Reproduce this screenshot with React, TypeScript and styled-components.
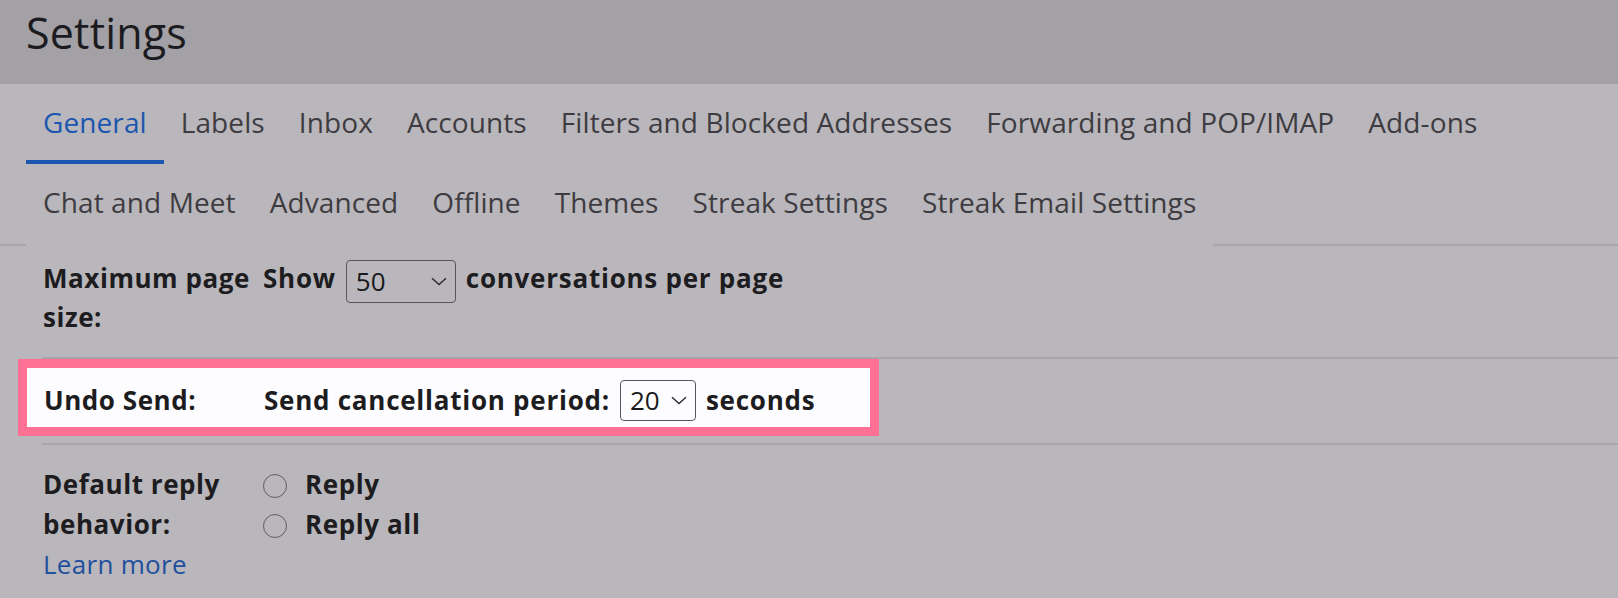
import React from "react";
import styled, { createGlobalStyle } from "styled-components";

const PAGE = "#b9b7bb";
const RULE = "#a8a6aa";
const INK = "#1d1c20";

const Global = createGlobalStyle`
  html, body {
    margin: 0;
    padding: 0;
    background: ${PAGE};
    font-family: "Open Sans", "Noto Sans", sans-serif;
    color: ${INK};
  }
  #root { min-height: 598px; }
`;

const Page = styled.div`
  width: 1618px;
  min-height: 598px;
  background: ${PAGE};
  overflow: hidden;
`;

const Header = styled.header`
  height: 84px;
  box-sizing: border-box;
  padding: 3px 0 0 26px;
  background: #a3a1a6;
  font-size: 43px;
  line-height: 60px;
  color: #1c1b1f;
  letter-spacing: 0.2px;
`;

const TabNav = styled.nav`
  display: flex;
  flex-wrap: wrap;
  padding-left: 26px;
  border-bottom: 2px solid ${RULE};
  box-sizing: border-box;
`;

const Tab = styled.a<{ $active?: boolean }>`
  position: relative;
  display: block;
  height: 82px;
  margin-bottom: -2px;
  padding: 0 17px;
  background: ${PAGE};
  font-size: 28px;
  line-height: 76px;
  letter-spacing: 0.1px;
  color: ${(p) => (p.$active ? "#1b56b0" : "#3e3c41")};
  white-space: nowrap;
  cursor: pointer;
  &::after {
    content: "";
    position: absolute;
    left: 0;
    right: 0;
    bottom: 2px;
    height: 4px;
    background: ${(p) => (p.$active ? "#1b56b0" : "transparent")};
  }
`;

const TabBreak = styled.div`
  flex-basis: 100%;
  height: 0;
`;

const Row = styled.section<{ $pt: number; $pb: number }>`
  margin-left: 42px;
  padding: ${(p) => p.$pt}px 0 ${(p) => p.$pb}px 1px;
  border-bottom: 2px solid ${RULE};
`;

const PlainRow = styled.section<{ $pt: number }>`
  margin-left: 42px;
  padding: ${(p) => p.$pt}px 0 0 1px;
`;

const Grid = styled.div<{ $lh: number }>`
  display: grid;
  grid-template-columns: 220px 1fr;
  font-size: 26px;
  line-height: ${(p) => p.$lh}px;
`;

const Label = styled.div`
  font-weight: 700;
  letter-spacing: 0.55px;
  color: ${INK};
`;

const Controls = styled.div`
  display: flex;
  align-items: flex-start;
  gap: 10px;
  font-weight: 700;
  letter-spacing: 0.75px;
  white-space: nowrap;
`;

const Highlight = styled.div`
  margin-left: -16px;
  width: 843px;
  box-sizing: border-box;
  padding: 13px 0 6px 17px;
  background: #fdfcfe;
  box-shadow: 0 0 0 9px #ff7194;
`;

const SelectBox = styled.div<{ $w: number; $h: number; $mt: number }>`
  box-sizing: border-box;
  width: ${(p) => p.$w}px;
  height: ${(p) => p.$h}px;
  margin-top: ${(p) => p.$mt}px;
  padding: 0 8px 0 9px;
  display: flex;
  align-items: center;
  justify-content: space-between;
  border: 1.5px solid #58565b;
  border-radius: 4px;
  font-weight: 400;
  font-size: 26px;
  letter-spacing: 0;
  color: #1a191c;
`;

const Chevron = () => (
  <svg width="16" height="9" viewBox="0 0 16 9" fill="none">
    <path d="M1 1.2 L8 7.5 L15 1.2" stroke="#2a292d" strokeWidth="1.4" />
  </svg>
);

const Radios = styled.div`
  display: flex;
  flex-direction: column;
`;

const RadioItem = styled.label`
  display: flex;
  align-items: center;
  gap: 18px;
  height: 40px;
  font-weight: 700;
  letter-spacing: 0.6px;
`;

const RadioCircle = styled.span`
  width: 24px;
  height: 24px;
  box-sizing: border-box;
  border: 1.7px solid #5f5d62;
  border-radius: 50%;
  margin-top: 4px;
`;

const LearnMore = styled.a`
  display: block;
  font-weight: 400;
  letter-spacing: 0.3px;
  color: #1f4f9e;
  cursor: pointer;
`;

const tabsRow1 = [
  "General",
  "Labels",
  "Inbox",
  "Accounts",
  "Filters and Blocked Addresses",
  "Forwarding and POP/IMAP",
  "Add-ons",
];
const tabsRow2 = [
  "Chat and Meet",
  "Advanced",
  "Offline",
  "Themes",
  "Streak Settings",
  "Streak Email Settings",
];

export default function App() {
  return (
    <Page>
      <Global />
      <Header>Settings</Header>
      <TabNav>
        {tabsRow1.map((t, i) => (
          <Tab key={t} $active={i === 0}>
            {t}
          </Tab>
        ))}
        <TabBreak />
        {tabsRow2.map((t) => (
          <Tab key={t}>{t}</Tab>
        ))}
      </TabNav>

      <Row $pt={13} $pb={20}>
        <Grid $lh={39}>
          <Label>Maximum page size:</Label>
          <Controls>
            <span>Show</span>
            <SelectBox $w={110} $h={43} $mt={1}>
              <span>50</span>
              <Chevron />
            </SelectBox>
            <span>conversations per page</span>
          </Controls>
        </Grid>
      </Row>

      <Row $pt={9} $pb={16}>
        <Highlight>
          <Grid $lh={39}>
            <Label>Undo Send:</Label>
            <Controls>
              <span>Send cancellation period:</span>
              <SelectBox $w={76} $h={41} $mt={-1}>
                <span>20</span>
                <Chevron />
              </SelectBox>
              <span>seconds</span>
            </Controls>
          </Grid>
        </Highlight>
      </Row>

      <PlainRow $pt={19}>
        <Grid $lh={40}>
          <div>
            <Label>Default reply behavior:</Label>
            <LearnMore>Learn more</LearnMore>
          </div>
          <Radios>
            <RadioItem>
              <RadioCircle />
              Reply
            </RadioItem>
            <RadioItem>
              <RadioCircle />
              Reply all
            </RadioItem>
          </Radios>
        </Grid>
      </PlainRow>
    </Page>
  );
}
